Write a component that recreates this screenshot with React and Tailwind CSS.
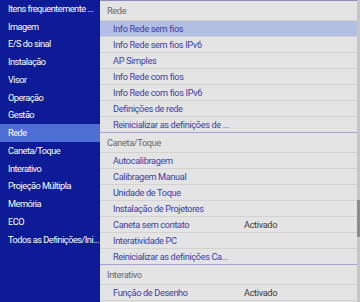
import React from 'react'

const leftItems = [
  'Itens frequentemente ...',
  'Imagem',
  'E/S do sinal',
  'Instalação',
  'Visor',
  'Operação',
  'Gestão',
  'Rede',
  'Caneta/Toque',
  'Interativo',
  'Projeção Múltipla',
  'Memória',
  'ECO',
  'Todos as Definições/Ini...',
]

const sections = [
  {
    title: 'Rede',
    items: [
      { label: 'Info Rede sem fios', active: true },
      { label: 'Info Rede sem fios IPv6' },
      { label: 'AP Simples' },
      { label: 'Info Rede com fios' },
      { label: 'Info Rede com fios IPv6' },
      { label: 'Definições de rede' },
      { label: 'Reinicializar as definições de ...' },
    ],
  },
  {
    title: 'Caneta/Toque',
    items: [
      { label: 'Autocalibragem' },
      { label: 'Calibragem Manual' },
      { label: 'Unidade de Toque' },
      { label: 'Instalação de Projetores' },
      { label: 'Caneta sem contato', value: 'Activado' },
      { label: 'Interatividade PC' },
      { label: 'Reinicializar as definições Ca...' },
    ],
  },
  {
    title: 'Interativo',
    items: [{ label: 'Função de Desenho', value: 'Activado' }],
  },
]

export default function App() {
  return (
    <div
      className="flex w-[360px] h-[302px] overflow-hidden bg-[#e4e4e4] text-[9.2px] tracking-[-0.35px]"
      style={{ fontFamily: 'Roboto, "Noto Sans", sans-serif' }}
    >
      {/* left menu */}
      <div className="w-[100px] shrink-0 overflow-hidden bg-[#0e1b97] text-white tracking-[-0.5px]">
        {leftItems.map((item) => (
          <div
            key={item}
            className={`h-[17.75px] flex items-center pl-2 whitespace-nowrap ${item === 'Rede' ? 'bg-[#4f6fd4]' : ''}`}
          >
            {item}
          </div>
        ))}
      </div>

      {/* right panel */}
      <div className="flex-1 border-t border-[#8c8cb8] overflow-hidden">
        {sections.map((sec, si) => (
          <div key={sec.title}>
            <div className="h-[20px] flex items-center pl-[7px] text-[#686868] border-b border-[#d2d2d2]">
              {sec.title}
            </div>
            {sec.items.map((it, i) => {
              const last = i === sec.items.length - 1 && si < sections.length - 1
              return (
                <div
                  key={it.label}
                  className={`h-[16px] flex items-center pl-[13px] border-b ${last ? 'border-[#a4a4d4]' : 'border-[#d2d2d2]'} ${it.active ? 'bg-[#b3bfe2]' : ''}`}
                >
                  <span className="w-[131px] text-[#3a40a6] whitespace-nowrap">{it.label}</span>
                  {it.value && <span className="text-[#3a3a3a]">{it.value}</span>}
                </div>
              )
            })}
          </div>
        ))}
      </div>

      {/* scrollbar */}
      <div className="w-[3px] shrink-0 bg-[#c6c6c6] flex flex-col">
        <div className="h-[200px]" />
        <div className="h-[37px] bg-[#8d8d8d]" />
      </div>
    </div>
  )
}
